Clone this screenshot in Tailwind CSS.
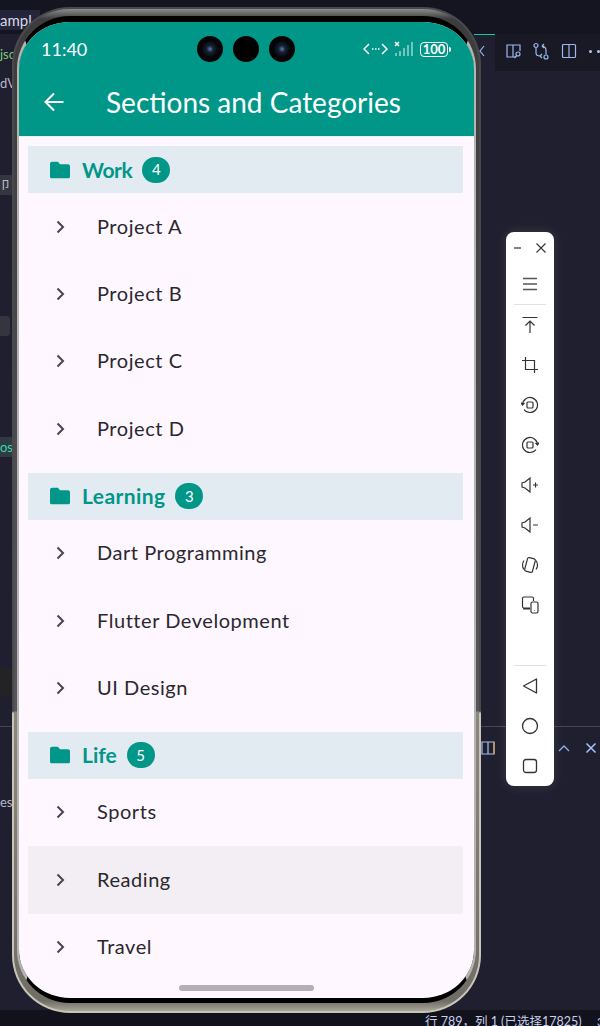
<!DOCTYPE html>
<html lang="en">
<head>
    <meta charset="UTF-8">
    <meta name="viewport" content="width=device-width, initial-scale=1.0">
    <title>Sections and Categories</title>
    <script src="https://cdn.jsdelivr.net/npm/@tailwindcss/browser@4"></script>
</head>
<body class="m-0">
<div class="relative w-[600px] h-[1026px] overflow-hidden bg-[#1f1f2f] font-['Lato','Noto_Sans_CJK_SC',sans-serif]">

    <!-- Editor behind the phone -->
    <div class="absolute left-0 top-0 w-full h-[34px] bg-[#151521]"></div>
    <div class="absolute left-0 top-[10px] w-[40px] h-[20px] bg-[#24243a] pl-0 text-[15px] leading-[20px] text-[#d8d8e4]">ampl</div>
    <div class="absolute left-0 top-[46px] text-[13px] leading-[16px] text-[#7fc97f]">jsc</div>
    <div class="absolute left-0 top-[75px] text-[13px] leading-[16px] text-[#b8b8c8]">dV</div>
    <div class="absolute left-0 top-[175px] w-[12px] h-[20px] bg-[#35353f] text-[11px] leading-[20px] text-[#d0d0e0]">卩</div>
    <div class="absolute left-0 top-[316px] w-[10px] h-[20px] bg-[#35353f] rounded-r-[3px]"></div>
    <div class="absolute left-0 top-[437px] w-[12px] h-[20px] bg-[#2f3b40] text-[13px] leading-[20px] text-[#3fd6b0]">os</div>
    <div class="absolute left-0 top-[668px] w-[12px] h-[28px] bg-[#232326]"></div>
    <div class="absolute left-0 top-[726px] w-[12px] h-px bg-[#45454f]"></div>
    <div class="absolute left-0 top-[794px] text-[13px] leading-[16px] text-[#b8b8c8]">es</div>
    <div class="absolute left-[474px] top-[34px] w-[21px] h-px bg-[#14c79a]"></div>
    <div class="absolute left-[495px] top-[34px] w-[105px] h-[37px] bg-[#191926]"></div>
    <svg class="absolute left-[477px] top-[44px]" width="10" height="14" viewBox="0 0 10 14" fill="none" stroke="#9fb4e8" stroke-width="1.2"><path d="M7 2 3 7l4 5"/></svg>
    <svg class="absolute left-[505px] top-[42px]" width="18" height="18" viewBox="0 0 18 18" fill="none" stroke="#9db8f0" stroke-width="1.2"><path d="M15 9V3H2v12h9M8 3v12"/><circle cx="13" cy="12" r="2"/><path d="m11.500 14-2 2"/></svg>
    <svg class="absolute left-[532px] top-[42px]" width="18" height="18" viewBox="0 0 18 18" fill="none" stroke="#9db8f0" stroke-width="1.2"><circle cx="4" cy="3.500" r="2"/><circle cx="14" cy="15" r="2"/><path d="M4 6v5c0 2 2 3 4 3M8 14l2-2M8 14l2 2M14 12.500V8c0-2-2-4-4-4M10 4l2-2M10 4l2 2"/></svg>
    <svg class="absolute left-[560px] top-[42px]" width="18" height="18" viewBox="0 0 18 18" fill="none" stroke="#9db8f0" stroke-width="1.2"><rect x="2.500" y="2.500" width="13" height="13" rx="1"/><path d="M9 2.500v13"/></svg>
    <div class="absolute left-[589px] top-[50px] flex gap-[5px]">
        <div class="w-[3px] h-[3px] rounded-full bg-[#b8c4e8]"></div>
        <div class="w-[3px] h-[3px] rounded-full bg-[#b8c4e8]"></div>
    </div>
    <div class="absolute left-[480px] top-[726px] w-[120px] h-px bg-[#45454f]"></div>
    <svg class="absolute left-[481px] top-[740px]" width="14" height="16" viewBox="0 0 14 16" fill="none" stroke-width="1.200"><path d="M1 2h12v12H1zM7 2v12" stroke="#a8c0f0"/><path d="M13 2v12" stroke="#d9a441"/></svg>
    <svg class="absolute left-[557px] top-[742px]" width="14" height="12" viewBox="0 0 14 12" fill="none" stroke="#8fb0f0" stroke-width="1.300"><path d="m2 9 5-5 5 5"/></svg>
    <svg class="absolute left-[585px] top-[742px]" width="12" height="12" viewBox="0 0 12 12" fill="none" stroke="#a8c4f8" stroke-width="1.500"><path d="m1.500 1.500 9 9m0-9-9 9"/></svg>
    <div class="absolute left-0 top-[1010px] w-full h-[16px] bg-[#12121c]"></div>
    <div class="absolute left-[425px] top-[1014px] text-[12.500px] leading-[16px] whitespace-nowrap text-[#c8d0ec]">行 789，列 1 (已选择17825)</div>
    <div class="absolute left-[597px] top-[1014px] text-[12px] leading-[16px] text-[#c8d0ec]">3</div>

    <!-- Phone frame -->
    <div class="absolute left-[12px] top-[7px] w-[469px] h-[1006px] rounded-[58px] bg-[linear-gradient(to_bottom,#4a4a4c_0%,#4a4a4c_70%,#c9c5b6_70.2%,#c9c5b6_100%)] p-[2px]">
        <div class="w-full h-full rounded-[56px] bg-[linear-gradient(to_bottom,#8c8c8c_0%,#3c3c3e_1%,#55555a_70%,#8a887e_70.2%,#6f6d66_99%,#a8a698_100%)] px-[3px] pt-[7px] pb-[8px]">
            <div class="w-full h-full rounded-[53px] border-x-2 border-x-[#b4b4b0] border-t-[6px] border-t-black border-b-[5px] border-b-black bg-black overflow-hidden">
                <!-- Screen -->
                <div class="relative w-full h-full rounded-[44px] overflow-hidden bg-[#fef7ff]">
                    <div class="h-[115px] bg-[#009688] border-b border-[#e6f2f1]">
                        <div class="flex items-center justify-between h-[54px] pl-[22px] pr-[22px]">
                            <span class="text-[18px] leading-[24px] text-white">11:40</span>
                            <div class="flex items-center gap-[6px] -translate-x-px">
                                <svg width="25" height="14" viewBox="0 0 25 14" fill="none" stroke="#fff" stroke-width="1.500"><path d="M6 2 1 7l5 5M19 2l5 5-5 5"/><path d="M9 7h1.500M12 7h1.500M15 7h1.500" stroke-width="1.500"/></svg>
                                <svg width="20" height="16" viewBox="0 0 20 16"><path d="m1 1 4 4m0-4L1 5" stroke="#fff" stroke-width="1.500" fill="none"/><g fill="#fff" fill-opacity=".45"><rect x="1" y="12" width="2" height="3"/><rect x="5" y="10" width="2" height="5"/><rect x="9" y="7" width="2" height="8"/><rect x="13" y="4" width="2" height="11"/><rect x="17" y="1" width="2" height="14"/></g></svg>
                                <div class="flex items-center">
                                    <div class="w-[28px] h-[15px] rounded-[4px] border border-white flex items-center justify-center text-[13px] leading-none font-bold text-white">100</div>
                                    <div class="w-[2px] h-[5px] ml-[1px] rounded-r-sm bg-white"></div>
                                </div>
                            </div>
                        </div>
                        <div class="flex items-center h-[52px] pl-[25px]">
                            <svg width="20" height="20" viewBox="0 0 20 20" fill="none" stroke="#fff" stroke-width="2"><path d="M19.500 10H1.500M10 1.500 1.500 10l8.500 8.500"/></svg>
                            <h1 class="ml-[42px] text-[28px] leading-[36px] font-normal whitespace-nowrap text-white">Sections and Categories</h1>
                        </div>
                    </div>

                    <div class="pl-[9px] pr-[11px] pt-[9px]">
                        <div class="flex items-center h-[47px] pl-[22px] bg-[#e3ebf2]">
                            <svg width="20" height="20" viewBox="0 0 24 24" fill="#009688" preserveAspectRatio="none"><path d="M2.500 2h7l2.500 3h9.500A2.500 2.500 0 0 1 24 7.500V20a2 2 0 0 1-2 2H2a2 2 0 0 1-2-2V4.500A2.500 2.500 0 0 1 2.500 2z"/></svg>
                            <span class="ml-[12px] text-[21px] tracking-[-0.4px] font-bold text-[#009688]">Work</span>
                            <span class="ml-[10px] flex items-center justify-center w-[28px] h-[26px] rounded-full bg-[#009688] text-[15px] text-white">4</span>
                        </div>
                        <div class="flex items-center h-[67.4px] pl-[28px]"><svg width="9" height="14" viewBox="0 0 9 14" fill="none" stroke="#49454f" stroke-width="2"><path d="m1.500 1.500 5.500 5.500-5.500 5.500"/></svg><span class="ml-[32px] mb-[2px] text-[20px] tracking-[0.55px] text-[#2a282e]">Project A</span></div>
                        <div class="flex items-center h-[67.4px] pl-[28px]"><svg width="9" height="14" viewBox="0 0 9 14" fill="none" stroke="#49454f" stroke-width="2"><path d="m1.500 1.500 5.500 5.500-5.500 5.500"/></svg><span class="ml-[32px] mb-[2px] text-[20px] tracking-[0.55px] text-[#2a282e]">Project B</span></div>
                        <div class="flex items-center h-[67.4px] pl-[28px]"><svg width="9" height="14" viewBox="0 0 9 14" fill="none" stroke="#49454f" stroke-width="2"><path d="m1.500 1.500 5.500 5.500-5.500 5.500"/></svg><span class="ml-[32px] mb-[2px] text-[20px] tracking-[0.55px] text-[#2a282e]">Project C</span></div>
                        <div class="flex items-center h-[67.4px] pl-[28px]"><svg width="9" height="14" viewBox="0 0 9 14" fill="none" stroke="#49454f" stroke-width="2"><path d="m1.500 1.500 5.500 5.500-5.500 5.500"/></svg><span class="ml-[32px] mb-[2px] text-[20px] tracking-[0.55px] text-[#2a282e]">Project D</span></div>

                        <div class="flex items-center h-[47px] mt-[10px] pl-[22px] bg-[#e3ebf2]">
                            <svg width="20" height="20" viewBox="0 0 24 24" fill="#009688" preserveAspectRatio="none"><path d="M2.500 2h7l2.500 3h9.500A2.500 2.500 0 0 1 24 7.500V20a2 2 0 0 1-2 2H2a2 2 0 0 1-2-2V4.500A2.500 2.500 0 0 1 2.500 2z"/></svg>
                            <span class="ml-[12px] text-[21px] tracking-[0.4px] font-bold text-[#009688]">Learning</span>
                            <span class="ml-[10px] flex items-center justify-center w-[28px] h-[26px] rounded-full bg-[#009688] text-[15px] text-white">3</span>
                        </div>
                        <div class="flex items-center h-[67.4px] pl-[28px]"><svg width="9" height="14" viewBox="0 0 9 14" fill="none" stroke="#49454f" stroke-width="2"><path d="m1.500 1.500 5.500 5.500-5.500 5.500"/></svg><span class="ml-[32px] mb-[2px] text-[20px] tracking-[0.55px] text-[#2a282e]">Dart Programming</span></div>
                        <div class="flex items-center h-[67.4px] pl-[28px]"><svg width="9" height="14" viewBox="0 0 9 14" fill="none" stroke="#49454f" stroke-width="2"><path d="m1.500 1.500 5.500 5.500-5.500 5.500"/></svg><span class="ml-[32px] mb-[2px] text-[20px] tracking-[0.55px] text-[#2a282e]">Flutter Development</span></div>
                        <div class="flex items-center h-[67.4px] pl-[28px]"><svg width="9" height="14" viewBox="0 0 9 14" fill="none" stroke="#49454f" stroke-width="2"><path d="m1.500 1.500 5.500 5.500-5.500 5.500"/></svg><span class="ml-[32px] mb-[2px] text-[20px] tracking-[0.55px] text-[#2a282e]">UI Design</span></div>

                        <div class="flex items-center h-[47px] mt-[10px] pl-[22px] bg-[#e3ebf2]">
                            <svg width="20" height="20" viewBox="0 0 24 24" fill="#009688" preserveAspectRatio="none"><path d="M2.500 2h7l2.500 3h9.500A2.500 2.500 0 0 1 24 7.500V20a2 2 0 0 1-2 2H2a2 2 0 0 1-2-2V4.500A2.500 2.500 0 0 1 2.500 2z"/></svg>
                            <span class="ml-[12px] text-[21px] font-bold text-[#009688]">Life</span>
                            <span class="ml-[10px] flex items-center justify-center w-[28px] h-[26px] rounded-full bg-[#009688] text-[15px] text-white">5</span>
                        </div>
                        <div class="flex items-center h-[67.4px] pl-[28px]"><svg width="9" height="14" viewBox="0 0 9 14" fill="none" stroke="#49454f" stroke-width="2"><path d="m1.500 1.500 5.500 5.500-5.500 5.500"/></svg><span class="ml-[32px] mb-[2px] text-[20px] tracking-[0.55px] text-[#2a282e]">Sports</span></div>
                        <div class="flex items-center h-[67.4px] pl-[28px] bg-[#f3eef3]"><svg width="9" height="14" viewBox="0 0 9 14" fill="none" stroke="#49454f" stroke-width="2"><path d="m1.500 1.500 5.500 5.500-5.500 5.500"/></svg><span class="ml-[32px] mb-[2px] text-[20px] tracking-[0.55px] text-[#2a282e]">Reading</span></div>
                        <div class="flex items-center h-[67.4px] pl-[28px]"><svg width="9" height="14" viewBox="0 0 9 14" fill="none" stroke="#49454f" stroke-width="2"><path d="m1.500 1.500 5.500 5.500-5.500 5.500"/></svg><span class="ml-[32px] mb-[2px] text-[20px] tracking-[0.55px] text-[#2a282e]">Travel</span></div>
                    </div>

                    <!-- Home indicator -->
                    <div class="absolute left-[160px] top-[963px] w-[135px] h-[6px] rounded-full bg-[#b5aeb6]"></div>
                </div>
            </div>
        </div>
    </div>

    <!-- Punch-hole cameras -->
    <div class="absolute left-[197px] top-[36px] flex gap-[10px]">
        <div class="w-[26px] h-[26px] rounded-full bg-[radial-gradient(circle,#5a7fa8_0%,#16233a_18%,#050508_45%,#000_100%)]"></div>
        <div class="w-[26px] h-[26px] rounded-full bg-black"></div>
        <div class="w-[26px] h-[26px] rounded-full bg-[radial-gradient(circle,#5a7fa8_0%,#16233a_18%,#050508_45%,#000_100%)]"></div>
    </div>

    <!-- Emulator toolbar -->
    <div class="absolute left-[506px] top-[232px] w-[48px] h-[554px] rounded-[8px] bg-white shadow-[0_0_12px_rgba(255,255,255,0.12)] flex flex-col items-center">
        <div class="flex items-center justify-between w-full h-[30px] mt-[1px] px-[7px]">
            <svg width="10" height="10" viewBox="0 0 10 10" stroke="#333" stroke-width="1.200"><path d="M1 5h7"/></svg>
            <svg width="12" height="12" viewBox="0 0 12 12" stroke="#333" stroke-width="1.100"><path d="m1.500 1.500 9 9m0-9-9 9"/></svg>
        </div>
        <svg class="mt-[13px]" width="16" height="16" viewBox="0 0 16 16" stroke="#555" stroke-width="1.300"><path d="M1 2.500h14M1 8h14M1 13.500h14"/></svg>
        <div class="w-[32px] h-px mt-[12px] bg-[#e2e2e2]"></div>
        <svg class="mt-[11px]" width="18" height="18" viewBox="0 0 18 18" fill="none" stroke="#333" stroke-width="1.200"><path d="M1.500 1.500h15M9 17V5M4.500 9.500 9 5l4.500 4.500"/></svg>
        <svg class="mt-[22px]" width="18" height="18" viewBox="0 0 18 18" fill="none" stroke="#333" stroke-width="1.200"><path d="M4.500 1v12.500H17M1 4.500h12.500V17"/></svg>
        <svg class="mt-[22px]" width="18" height="18" viewBox="0 0 18 18" fill="none" stroke="#333" stroke-width="1.200"><path d="M1.500 9A7.500 7.500 0 1 1 3 13.500M3.500 7l-2 2L0 6.500"/><rect x="6" y="6" width="6" height="6" rx="1"/></svg>
        <svg class="mt-[22px]" width="18" height="18" viewBox="0 0 18 18" fill="none" stroke="#333" stroke-width="1.200"><path d="M16.500 9A7.500 7.500 0 1 0 15 13.500M14.500 7l2 2L18 6.500"/><rect x="6" y="6" width="6" height="6" rx="1"/></svg>
        <svg class="mt-[22px]" width="18" height="18" viewBox="0 0 18 18" fill="none" stroke="#333" stroke-width="1.200"><path d="M1 7v4l3 1 5 4V2L4 6zM12 9h5M14.500 6.500v5"/></svg>
        <svg class="mt-[22px]" width="18" height="18" viewBox="0 0 18 18" fill="none" stroke="#333" stroke-width="1.200"><path d="M1 7v4l3 1 5 4V2L4 6zM12 9h5"/></svg>
        <svg class="mt-[22px]" width="18" height="18" viewBox="0 0 18 18" fill="none" stroke="#333" stroke-width="1.200"><rect x="5" y="2" width="8" height="14" rx="1.500" transform="rotate(15 9 9)"/><path d="M3 4.500C1 7 1 11 3 13.500M15 4.500c2 2.500 2 6.500 0 9"/></svg>
        <svg class="mt-[22px]" width="18" height="18" viewBox="0 0 18 18" fill="none" stroke="#333" stroke-width="1.200"><path d="M9 12H3a1.500 1.500 0 0 1-1.500-1.500v-8A1.500 1.500 0 0 1 3 1h8a1.500 1.500 0 0 1 1.500 1.500V5M2 13h7"/><rect x="10" y="6" width="7" height="11" rx="1.500"/><path d="M13.500 14.500v.5"/></svg>
        <div class="w-[32px] h-px mt-[51px] bg-[#e2e2e2]"></div>
        <svg class="mt-[11px]" width="18" height="18" viewBox="0 0 18 18" fill="none" stroke="#333" stroke-width="1.300" stroke-linejoin="round"><path d="M15.500 2v14L2.500 9z"/></svg>
        <svg class="mt-[22px]" width="18" height="18" viewBox="0 0 18 18" fill="none" stroke="#333" stroke-width="1.300"><circle cx="9" cy="9" r="7.500"/></svg>
        <svg class="mt-[22px]" width="18" height="18" viewBox="0 0 18 18" fill="none" stroke="#333" stroke-width="1.300"><rect x="2.500" y="2.500" width="13" height="13" rx="2.500"/></svg>
    </div>
</div>
</body>
</html>
